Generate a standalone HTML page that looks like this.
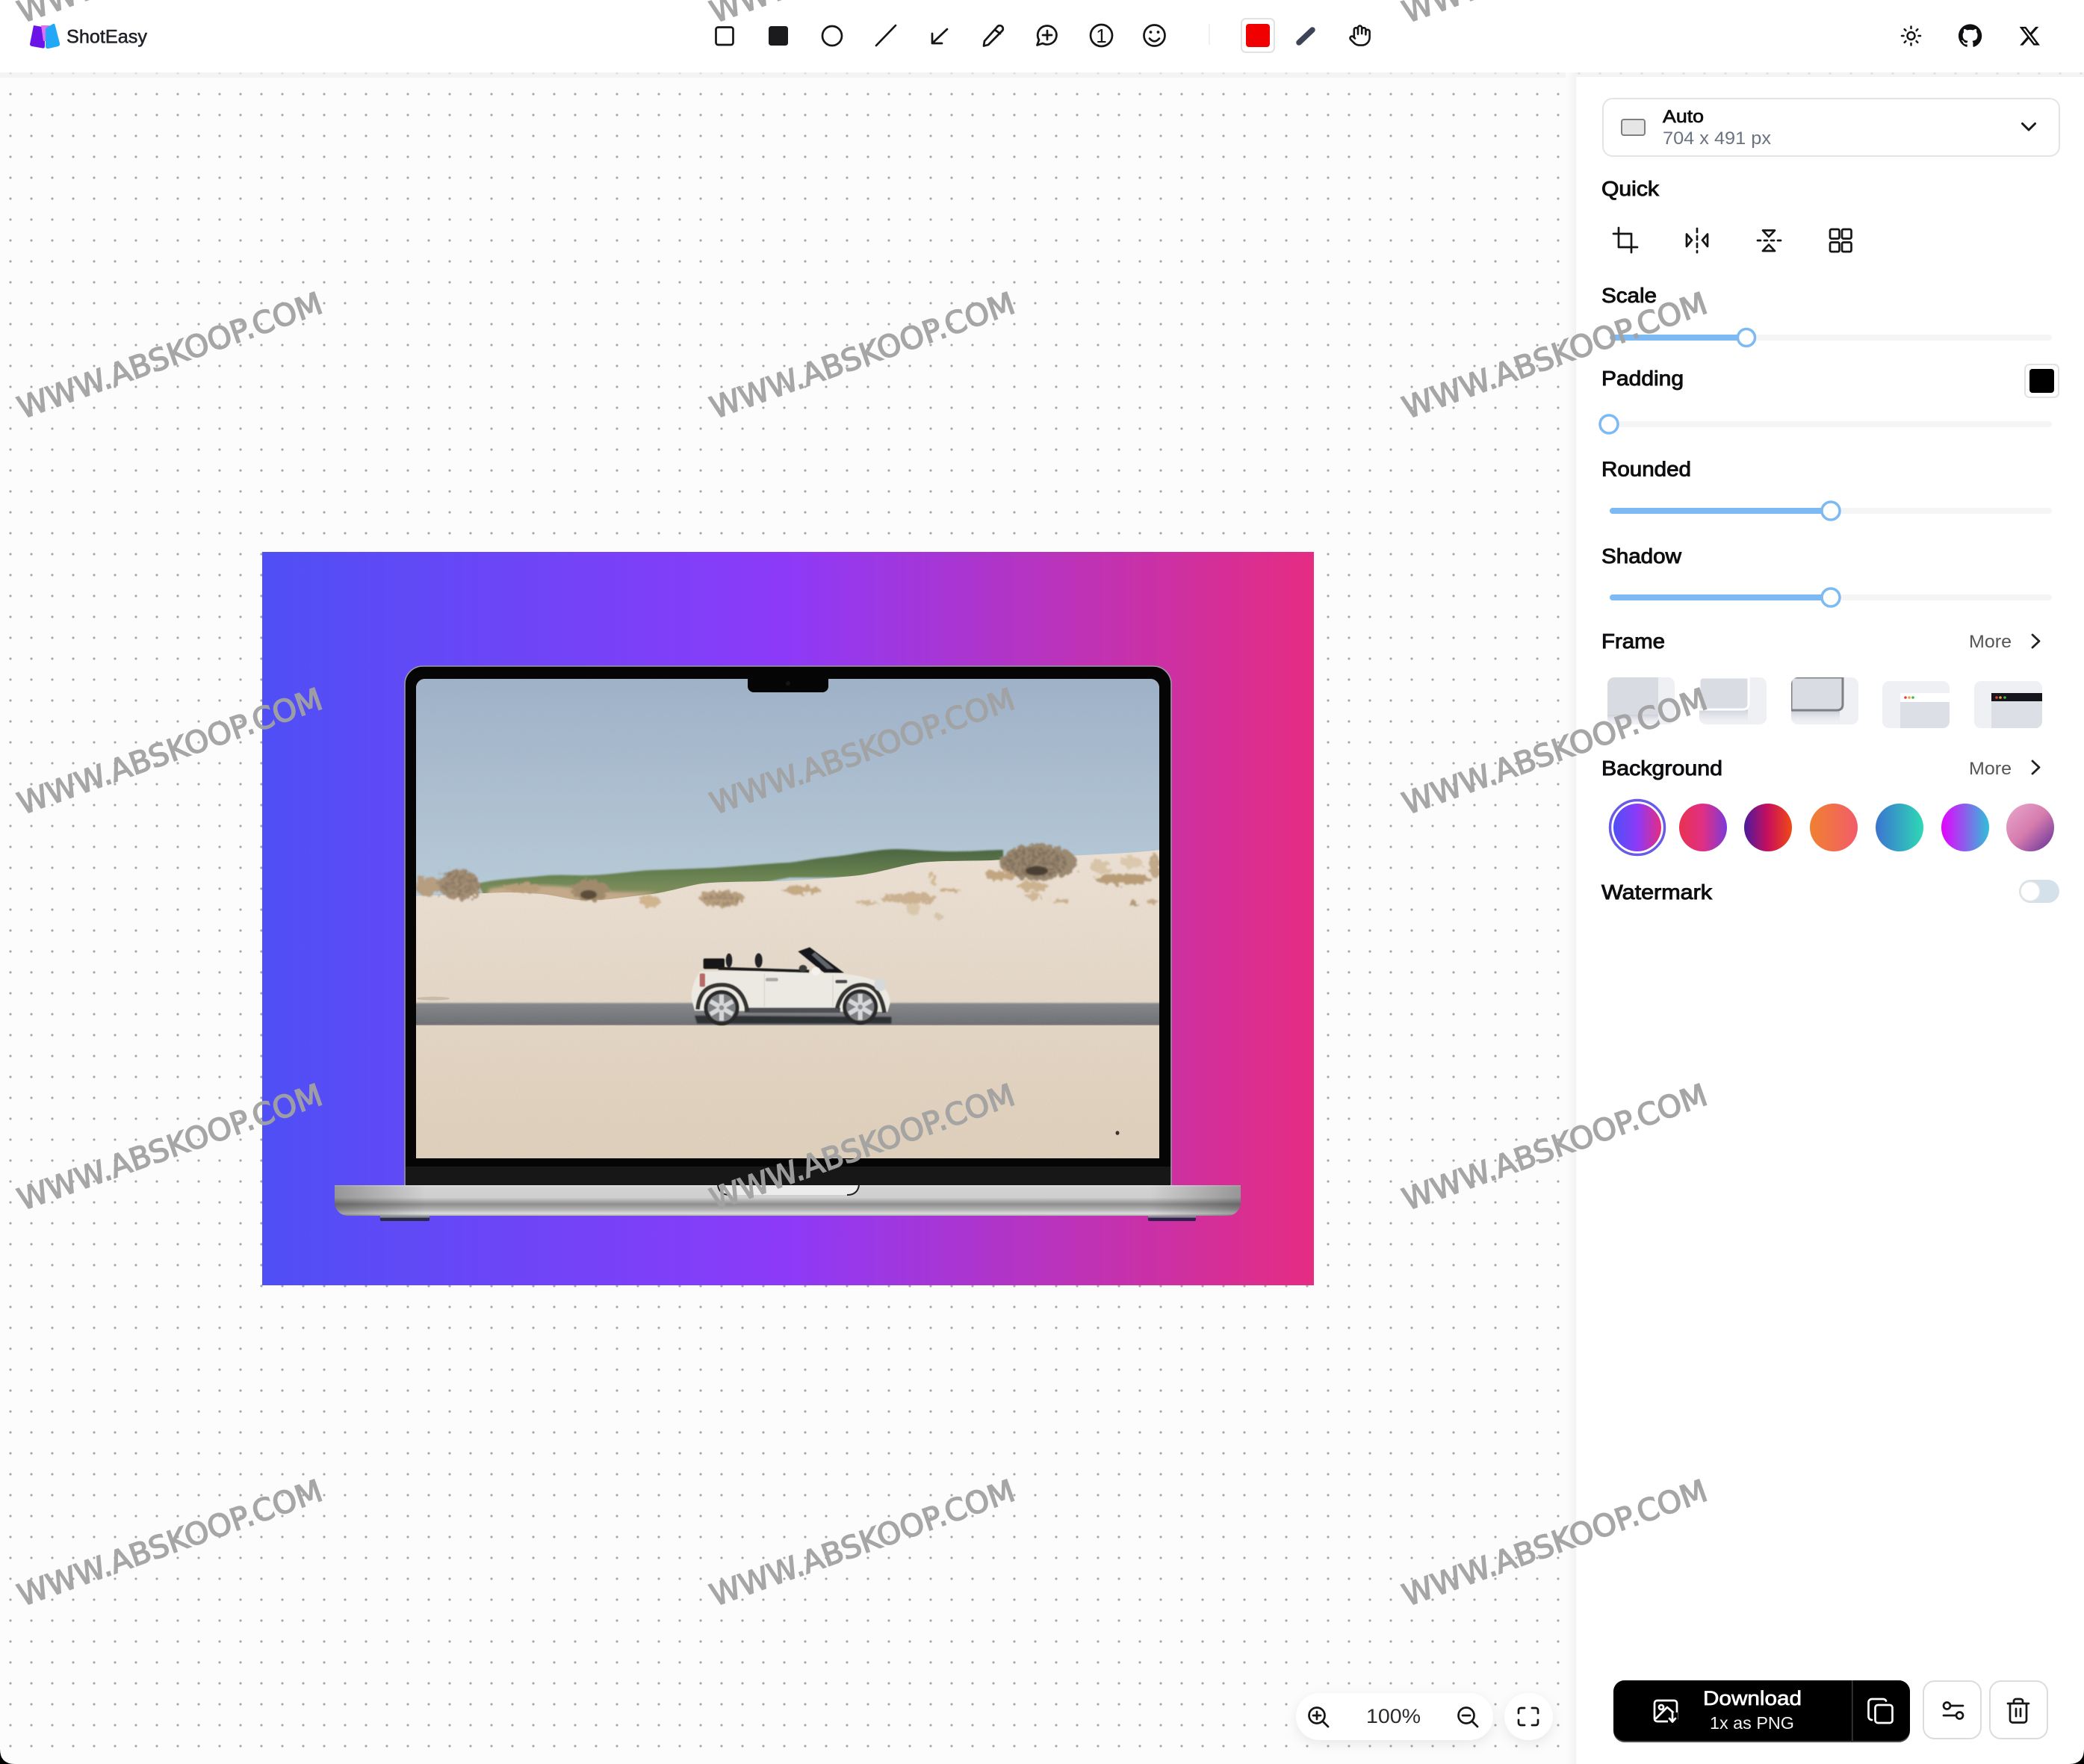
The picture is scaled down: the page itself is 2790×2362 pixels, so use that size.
<!DOCTYPE html>
<html lang="en">
<head>
<meta charset="utf-8">
<title>ShotEasy</title>
<style>
html,body{margin:0;padding:0;width:2790px;height:2362px;overflow:hidden;background:#fcfcfc}
svg{display:block}
text{font-family:"Liberation Sans",sans-serif}
.lb{font-size:28px;fill:#0e0e10;stroke:#0e0e10;stroke-width:.95px}
.more{font-size:24px;fill:#555}
.wm{font-family:"DejaVu Sans",sans-serif;font-size:41px;fill:#a2a2a2;stroke:#a2a2a2;stroke-width:1.5px;opacity:.95}
.ic{fill:none;stroke:#161618;stroke-width:2.7;stroke-linecap:round;stroke-linejoin:round}
.iw{fill:none;stroke:#fff;stroke-width:2.7;stroke-linecap:round;stroke-linejoin:round}
</style>
</head>
<body>
<svg xmlns="http://www.w3.org/2000/svg" width="2790" height="2362" viewBox="0 0 2790 2362">
<defs>
  <pattern id="dots" width="28" height="28" patternUnits="userSpaceOnUse"><circle cx="14" cy="14" r="1.6" fill="#a9a9a9"/></pattern>
  <linearGradient id="g1" x1="0" x2="1" y1="0" y2="0"><stop offset="0" stop-color="#4f4ff6"/><stop offset=".5" stop-color="#8d3af8"/><stop offset="1" stop-color="#e52c82"/></linearGradient>
  <linearGradient id="g2" x1="0" x2="1" y1="0" y2="0"><stop offset="0" stop-color="#e8324f"/><stop offset=".5" stop-color="#e02f85"/><stop offset="1" stop-color="#7c3ad8"/></linearGradient>
  <linearGradient id="g3" x1="0" x2="1" y1="0" y2="0"><stop offset="0" stop-color="#4a1a9e"/><stop offset=".5" stop-color="#c80f5c"/><stop offset="1" stop-color="#f04a14"/></linearGradient>
  <linearGradient id="g4" x1="0" x2="1" y1="0" y2="0"><stop offset="0" stop-color="#f08030"/><stop offset="1" stop-color="#f25c6a"/></linearGradient>
  <linearGradient id="g5" x1="0" x2="1" y1="0" y2="0"><stop offset="0" stop-color="#3b74d0"/><stop offset="1" stop-color="#2dd9b5"/></linearGradient>
  <linearGradient id="g6" x1="0" x2="1" y1="0" y2="0"><stop offset="0" stop-color="#e600ff"/><stop offset="1" stop-color="#2fc0d8"/></linearGradient>
  <linearGradient id="g7" x1="0" x2="1" y1="0" y2="1"><stop offset="0" stop-color="#e9a9cc"/><stop offset=".5" stop-color="#d67cae"/><stop offset="1" stop-color="#5f2d98"/></linearGradient>
  <linearGradient id="sky" x1="0" x2="0" y1="0" y2="1"><stop offset="0" stop-color="#9fb2c9"/><stop offset="1" stop-color="#b7cbd8"/></linearGradient>
  <linearGradient id="sand" x1="0" x2="0" y1="0" y2="1"><stop offset="0" stop-color="#ebe0d3"/><stop offset="1" stop-color="#e3d6c7"/></linearGradient>
  <linearGradient id="sand2" x1="0" x2="0" y1="0" y2="1"><stop offset="0" stop-color="#e3d5c3"/><stop offset="1" stop-color="#decfbb"/></linearGradient>
  <linearGradient id="road" x1="0" x2="0" y1="0" y2="1"><stop offset="0" stop-color="#85878a"/><stop offset="1" stop-color="#6e6f72"/></linearGradient>
  <linearGradient id="base" x1="0" x2="0" y1="0" y2="1"><stop offset="0" stop-color="#e6e6e6"/><stop offset=".06" stop-color="#d2d2d2"/><stop offset=".4" stop-color="#cfcfcf"/><stop offset=".62" stop-color="#8e8e8e"/><stop offset=".78" stop-color="#aeaeae"/><stop offset=".93" stop-color="#dcdcdc"/><stop offset="1" stop-color="#a4a4a4"/></linearGradient>
  <linearGradient id="baseh" x1="0" x2="1" y1="0" y2="0"><stop offset="0" stop-color="#000" stop-opacity=".28"/><stop offset=".1" stop-color="#000" stop-opacity="0"/><stop offset=".9" stop-color="#000" stop-opacity="0"/><stop offset="1" stop-color="#000" stop-opacity=".28"/></linearGradient>
  <linearGradient id="fade" x1="0" x2="0" y1="0" y2="1"><stop offset="0" stop-color="#c9ccd6" stop-opacity=".9"/><stop offset="1" stop-color="#eff0f4" stop-opacity="0"/></linearGradient>
  <linearGradient id="pshadow" x1="0" x2="1" y1="0" y2="0"><stop offset="0" stop-color="#fcfcfc"/><stop offset="1" stop-color="#f2f2f2"/></linearGradient>
  <linearGradient id="green" x1="0" x2="0" y1="0" y2="1"><stop offset="0" stop-color="#4a6540"/><stop offset=".55" stop-color="#6c8552"/><stop offset="1" stop-color="#8f9465"/></linearGradient>
  <filter id="b2" x="-10%" y="-10%" width="120%" height="120%"><feGaussianBlur stdDeviation="2"/></filter>
  <filter id="b1" x="-10%" y="-10%" width="120%" height="120%"><feGaussianBlur stdDeviation="1"/></filter>
  <filter id="b05" x="-5%" y="-5%" width="110%" height="110%"><feGaussianBlur stdDeviation="1.800"/></filter>
  <filter id="bush" x="-30%" y="-30%" width="160%" height="160%"><feTurbulence type="fractalNoise" baseFrequency=".14" numOctaves="3" seed="4" result="n"/><feDisplacementMap in="SourceGraphic" in2="n" scale="14"/><feGaussianBlur stdDeviation="1"/></filter>
  <filter id="twig" x="-30%" y="-30%" width="160%" height="160%"><feTurbulence type="fractalNoise" baseFrequency=".22" numOctaves="3" seed="8" result="n"/><feDisplacementMap in="SourceGraphic" in2="n" scale="10" result="d"/><feColorMatrix in="n" values="0 0 0 0 0 0 0 0 0 0 0 0 0 0 0 4 0 0 0 -1.500" result="m"/><feComposite in="d" in2="m" operator="in"/><feGaussianBlur stdDeviation="1"/></filter>
  <filter id="grain" x="0" y="0" width="100%" height="100%"><feTurbulence type="fractalNoise" baseFrequency=".6" numOctaves="2" seed="2"/><feColorMatrix values="0 0 0 0 .45 0 0 0 0 .4 0 0 0 0 .35 0 0 0 1.400 -.55"/></filter>
  <clipPath id="screen"><path d="M557 1551V921a12 12 0 0 1 12-12H1540a12 12 0 0 1 12 12V1551Z"/></clipPath>
  <clipPath id="f1"><rect x="2152" y="907" width="90" height="63" rx="9"/></clipPath>
  <clipPath id="f2"><rect x="2275" y="907" width="90" height="63" rx="9"/></clipPath>
  <clipPath id="f3"><rect x="2398" y="907" width="90" height="63" rx="9"/></clipPath>
  <clipPath id="f4"><rect x="2520" y="912" width="90" height="63" rx="9"/></clipPath>
  <clipPath id="f5"><rect x="2643" y="912" width="91" height="63" rx="9"/></clipPath>
</defs>

<!-- canvas -->
<rect width="2790" height="2362" fill="#fcfcfc"/>
<rect width="2790" height="2362" fill="url(#dots)"/>

<!-- main image -->
<rect x="351" y="739" width="1408" height="982" fill="url(#g1)"/>

<!-- laptop lid -->
<path d="M542 1587V916a24 24 0 0 1 24-24H1544a24 24 0 0 1 24 24V1587Z" fill="#050505" stroke="#9a9aa2" stroke-width="1.6"/>
<rect x="543" y="1562" width="1024" height="25" fill="#171717"/>

<!-- photo -->
<g clip-path="url(#screen)">
  <rect x="557" y="909" width="995" height="642" fill="#e0d2bf"/>
  <rect x="557" y="909" width="995" height="290" fill="url(#sky)"/>
  <!-- distant green -->
  <path d="M640 1183C660 1178 680 1177 724 1173C750 1170 770 1173 790 1172C820 1171 850 1166 874 1165C905 1164 930 1163 957 1162C990 1160 1030 1156 1057 1155C1080 1152 1100 1148 1117 1147C1150 1143 1175 1137 1200 1137C1225 1137 1255 1141 1283 1140C1305 1140 1325 1138 1343 1138V1175H1057L950 1195L790 1210L650 1205Z" fill="url(#green)" filter="url(#b1)"/>
  <path d="M655 1190C700 1182 760 1186 800 1192C830 1196 860 1194 880 1195L800 1210L650 1205Z" fill="#c4a98a" filter="url(#b2)"/>
  <path d="M1440 1146H1490" stroke="#4e6048" stroke-width="3" filter="url(#b1)"/>
  <!-- dune -->
  <path d="M557 1200C600 1199 640 1196 674 1195C695 1195 710 1196 724 1197C745 1199 760 1204 774 1205C790 1206 810 1205 824 1203C840 1201 855 1199 874 1197C900 1193 920 1186 940 1183C970 1180 1000 1181 1024 1180C1060 1180 1100 1177 1150 1172C1180 1168 1205 1159 1233 1155C1265 1152 1295 1153 1327 1152C1370 1149 1410 1147 1450 1145C1490 1143 1520 1142 1552 1138V1350H557Z" fill="url(#sand)"/>
  <!-- bushes -->
  <g filter="url(#bush)">
    <ellipse cx="574" cy="1187" rx="18" ry="13" fill="#b79e80"/>
    <ellipse cx="615" cy="1185" rx="28" ry="20" fill="#a58f75"/>
    <ellipse cx="790" cy="1192" rx="26" ry="14" fill="#a08a6c"/>
    <ellipse cx="700" cy="1189" rx="24" ry="6" fill="#b89d7a"/>
    <ellipse cx="967" cy="1203" rx="30" ry="11" fill="#b9a080"/>
    <ellipse cx="870" cy="1207" rx="14" ry="8" fill="#d0b58f"/>
    <ellipse cx="1390" cy="1155" rx="52" ry="24" fill="#9b8971"/>
    <ellipse cx="1340" cy="1172" rx="22" ry="6" fill="#c3a681"/>
    <ellipse cx="1503" cy="1177" rx="38" ry="7" fill="#b89c76"/>
    <ellipse cx="1473" cy="1160" rx="14" ry="9" fill="#d8c4a8"/>
    <ellipse cx="1546" cy="1160" rx="8" ry="16" fill="#c0a888"/>
    <ellipse cx="1515" cy="1155" rx="14" ry="8" fill="#dcc9ae"/>
    <ellipse cx="1217" cy="1203" rx="38" ry="7" fill="#cbb190"/>
    <ellipse cx="1073" cy="1192" rx="26" ry="5" fill="#c5a983"/>
    <ellipse cx="1160" cy="1208" rx="14" ry="3" fill="#cdb797"/>
    <ellipse cx="1250" cy="1178" rx="5" ry="7" fill="#d2b992"/>
    <ellipse cx="1383" cy="1187" rx="22" ry="6" fill="#cdb28e"/>
    <ellipse cx="1383" cy="1200" rx="10" ry="5" fill="#d0b796"/>
    <ellipse cx="1420" cy="1207" rx="12" ry="3" fill="#c9b08e"/>
    <ellipse cx="1517" cy="1210" rx="6" ry="3" fill="#b39a78"/>
    <ellipse cx="1543" cy="1207" rx="8" ry="3" fill="#c4a987"/>
    <ellipse cx="1257" cy="1227" rx="6" ry="4" fill="#d6c5aa"/>
    <ellipse cx="1223" cy="1217" rx="10" ry="8" fill="#dac8ab"/>
    <ellipse cx="1272" cy="1192" rx="14" ry="3" fill="#c9ac88"/>
  </g>
  <g filter="url(#twig)" opacity=".55">
    <ellipse cx="615" cy="1182" rx="26" ry="18" fill="#7a6854"/>
    <ellipse cx="1385" cy="1155" rx="44" ry="20" fill="#6a5a48"/>
    <ellipse cx="967" cy="1204" rx="24" ry="8" fill="#8a755c"/>
  </g>
  <ellipse cx="788" cy="1198" rx="11" ry="6" fill="#5a4b38" filter="url(#b1)"/>
  <ellipse cx="1388" cy="1166" rx="15" ry="6" fill="#4a3e30" filter="url(#b1)"/>
  <!-- road and foreground -->
  <rect x="550" y="1343" width="1010" height="30" fill="url(#road)" filter="url(#b1)"/>
  <rect x="557" y="1373" width="995" height="180" fill="url(#sand2)"/>
  <ellipse cx="1496" cy="1517" rx="2.500" ry="2.800" fill="#3a3028"/>
  <ellipse cx="580" cy="1337" rx="22" ry="2.500" fill="#c9bba8"/>
  <rect x="557" y="909" width="995" height="642" filter="url(#grain)" opacity=".12"/>
  <!-- car -->
  <g transform="translate(850 1180) scale(.33333)" filter="url(#b05)">
    <path d="M240 540L1030 545V572L250 572Z" fill="#2f3134" filter="url(#b2)"/>
    <path d="M228 475Q222 420 262 362L700 362L840 372Q950 384 985 412Q1025 445 1025 490L1015 525L240 520Z" fill="#ebe9e2"/>
    <rect x="440" y="508" width="385" height="20" fill="#4e4f53"/>
    <path d="M252 515C258 440 298 416 350 416C402 416 440 450 452 524M812 510C828 445 868 416 915 416C962 416 992 460 1002 528" fill="none" stroke="#353433" stroke-width="17"/>
    <rect x="275" y="310" width="85" height="42" rx="6" fill="#141416"/>
    <ellipse cx="378" cy="318" rx="13" ry="28" fill="#242426"/>
    <ellipse cx="497" cy="318" rx="15" ry="29" fill="#222226"/>
    <path d="M335 350L700 362" stroke="#1a1a1c" stroke-width="12"/>
    <path d="M655 282L702 265L840 368L760 368Z" fill="#16161a"/>
    <path d="M722 285L800 352L772 352L710 296Z" fill="#5f6568"/>
    <ellipse cx="675" cy="350" rx="16" ry="14" fill="#3a3a38"/>
    <ellipse cx="727" cy="362" rx="18" ry="17" fill="#f4f2ec"/>
    <rect x="260" y="370" width="22" height="54" rx="6" fill="#b86a66"/>
    <ellipse cx="985" cy="416" rx="24" ry="26" fill="#d6d9da"/>
    <rect x="525" y="388" width="50" height="14" rx="6" fill="#a9a9a6"/>
    <rect x="805" y="396" width="48" height="14" rx="6" fill="#4c4c4e"/>
    <path d="M520 372V505M795 378V505" stroke="#cfcdc5" stroke-width="3"/>
    <circle cx="348" cy="508" r="71" fill="#29292b"/>
    <circle cx="348" cy="508" r="56" fill="#7d7f83"/>
    <g stroke="#d6d7d8" stroke-width="18"><path d="M348 456V560M303 482L393 534M303 534L393 482"/></g>
    <circle cx="348" cy="508" r="10" fill="#8c8d90"/>
    <circle cx="905" cy="505" r="71" fill="#29292b"/>
    <circle cx="905" cy="505" r="56" fill="#7d7f83"/>
    <g stroke="#d6d7d8" stroke-width="18"><path d="M905 453V557M860 479L950 531M860 531L950 479"/></g>
    <circle cx="905" cy="505" r="10" fill="#8c8d90"/>
  </g>
</g>
<!-- notch -->
<path d="M1001 908H1109V919a8 8 0 0 1-8 8H1009a8 8 0 0 1-8-8Z" fill="#050505"/>
<circle cx="1055" cy="915" r="3" fill="#14141c"/>

<!-- base -->
<path d="M448 1587H1661V1610a18 18 0 0 1-18 18H466a18 18 0 0 1-18-18Z" fill="url(#base)"/>
<path d="M448 1587H1661V1610a18 18 0 0 1-18 18H466a18 18 0 0 1-18-18Z" fill="url(#baseh)"/>
<path d="M961 1587H1150Q1148 1600 1134 1600H977Q963 1600 961 1587Z" fill="#ececec"/>
<path d="M961 1587Q963 1600 977 1600" fill="none" stroke="#222" stroke-width="2"/>
<path d="M1150 1587Q1148 1600 1134 1600" fill="none" stroke="#222" stroke-width="2"/>
<rect x="509" y="1628" width="66" height="7" rx="2" fill="#2a2a4a"/>
<rect x="509" y="1628" width="66" height="2.500" fill="#8a8a94"/>
<rect x="1537" y="1628" width="64" height="7" rx="2" fill="#321f50"/>
<rect x="1537" y="1628" width="64" height="2.500" fill="#8a8a94"/>

<!-- header -->
<rect x="0" y="97" width="2790" height="7" fill="#f2f2f2" opacity=".75"/>
<rect width="2790" height="97" fill="#fff"/>
<!-- logo -->
<path d="M45 34L57 36Q60 36 60 39V62Q60 65 57 64.500L43 62Q40 61.500 40 59Z" fill="#6a14e8"/>
<path d="M55 34H66V55H58Z" fill="#da72f2"/>
<path d="M64 36L71 32Q73 31 73.500 33L80 58Q80.500 61 78 62L65 65Q61 65.500 61 62V40Q61 37 64 36Z" fill="#22a8f6"/>
<text x="89" y="57.500" font-size="25" fill="#20222a" stroke="#20222a" stroke-width=".55" textLength="108" lengthAdjust="spacingAndGlyphs">ShotEasy</text>
<!-- tools -->
<rect class="ic" x="958.500" y="36.500" width="23" height="23.500" rx="3"/>
<rect x="1029" y="35" width="26" height="26" rx="3.500" fill="#1b1b1d"/>
<circle class="ic" cx="1114" cy="48" r="13"/>
<path class="ic" d="M1173 61L1199 34"/>
<path class="ic" d="M1268 39L1248 58M1248 45V58H1261"/>
<path class="ic" d="M1335 36a4.200 4.200 0 0 1 7 5L1323 60L1317 61.500L1318 55ZM1332 40L1339 45"/>
<path class="ic" d="M1402 34.500a12.500 12.500 0 1 1-6 23.500L1388.500 60.500L1391 53.500A12.500 12.500 0 0 1 1402 34.500ZM1402 41V53M1396 47H1408"/>
<circle class="ic" cx="1474.500" cy="47.500" r="14.500"/>
<text x="1474.500" y="57" font-size="26" text-anchor="middle" fill="#161618">1</text>
<circle class="ic" cx="1545.500" cy="47.500" r="14"/>
<circle cx="1540.500" cy="43" r="1.900" fill="#161618"/><circle cx="1550.500" cy="43" r="1.900" fill="#161618"/>
<path class="ic" d="M1539 51.500Q1545.500 59 1552 51.500"/>
<rect x="1618" y="32" width="2" height="28" fill="#efefef"/>
<rect x="1662" y="25" width="44" height="45" rx="6" fill="#fff" stroke="#e2e2e2" stroke-width="2"/>
<rect x="1668" y="32" width="32" height="31" rx="4" fill="#f00000"/>
<path d="M1739 57L1757 40" stroke="#3f4356" stroke-width="7.500" stroke-linecap="round"/>
<g class="ic" transform="translate(1805 32) scale(1.3)" style="stroke-width:2"><path d="M18 11V6a2 2 0 0 0-2-2a2 2 0 0 0-2 2"/><path d="M14 10V4a2 2 0 0 0-2-2a2 2 0 0 0-2 2v2"/><path d="M10 10.500V6a2 2 0 0 0-2-2a2 2 0 0 0-2 2v8"/><path d="M18 8a2 2 0 1 1 4 0v6a8 8 0 0 1-8 8h-2c-2.800 0-4.500-.86-5.990-2.340l-3.600-3.600a2 2 0 0 1 2.830-2.820L7 15"/></g>
<!-- right header -->
<g class="ic" transform="translate(2543.500 33) scale(1.25)" style="stroke-width:2"><circle cx="12" cy="12" r="4"/><path d="M12 2v2M12 20v2M4.930 4.930l1.410 1.410M17.660 17.660l1.410 1.410M2 12h2M20 12h2M6.340 17.660l-1.410 1.410M19.070 4.930l-1.410 1.410"/></g>
<path transform="translate(2622 32) scale(1.3)" fill="#0f0f11" d="M12 .297c-6.630 0-12 5.373-12 12 0 5.303 3.438 9.800 8.205 11.385.6.113.82-.258.82-.577 0-.285-.01-1.040-.015-2.040-3.338.724-4.042-1.610-4.042-1.610C4.422 18.070 3.633 17.700 3.633 17.700c-1.087-.744.084-.729.084-.729 1.205.084 1.838 1.236 1.838 1.236 1.070 1.835 2.809 1.305 3.495.998.108-.776.417-1.305.76-1.605-2.665-.3-5.466-1.332-5.466-5.930 0-1.310.465-2.380 1.235-3.220-.135-.303-.54-1.523.105-3.176 0 0 1.005-.322 3.300 1.230.96-.267 1.980-.399 3-.405 1.020.006 2.040.138 3 .405 2.280-1.552 3.285-1.230 3.285-1.230.645 1.653.24 2.873.12 3.176.765.84 1.230 1.910 1.230 3.220 0 4.610-2.805 5.625-5.475 5.920.42.36.81 1.096.81 2.220 0 1.606-.015 2.896-.015 3.286 0 .315.21.69.825.57C20.565 22.092 24 17.592 24 12.297c0-6.627-5.373-12-12-12"/>
<path transform="translate(2702 33) scale(1.27)" fill="#0f0f11" d="M18.244 2.250h3.308l-7.227 8.260 8.502 11.240H16.170l-5.214-6.817L4.990 21.750H1.680l7.730-8.835L1.254 2.250H8.080l4.713 6.231zm-1.161 17.520h1.833L7.084 4.126H5.117z"/>

<!-- panel -->
<rect x="2096" y="97" width="15" height="2265" fill="url(#pshadow)"/>
<rect x="2110" y="103" width="680" height="2259" fill="#fff"/>
<rect x="2146" y="132" width="611" height="77" rx="13" fill="#fff" stroke="#e4e4e4" stroke-width="2"/>
<rect x="2171" y="160" width="31" height="21" rx="3" fill="#e6e6e6" stroke="#808080" stroke-width="2"/>
<text x="2226" y="164" font-size="24" fill="#0e0e10" stroke="#0e0e10" stroke-width=".7" textLength="55" lengthAdjust="spacingAndGlyphs">Auto</text>
<text x="2226" y="193" font-size="24" fill="#6b7280" textLength="145" lengthAdjust="spacingAndGlyphs">704 x 491 px</text>
<path d="M2707.500 165.500L2716 174L2724.500 165.500" fill="none" stroke="#18181a" stroke-width="3" stroke-linecap="round" stroke-linejoin="round"/>

<text class="lb" x="2144" y="262" textLength="77" lengthAdjust="spacingAndGlyphs">Quick</text>
<path class="ic" d="M2167 305V331H2192M2160 313H2184V338"/>
<path class="ic" d="M2272 306V338" stroke-dasharray="5 5"/>
<path class="ic" d="M2258 313.500L2265 321.500L2258 330ZM2286 313.500L2279 321.500L2286 330Z"/>
<path class="ic" d="M2353 322H2384" stroke-dasharray="4 5"/>
<path class="ic" d="M2360 308.500H2376L2368 317ZM2360 336H2376L2368 327.500Z"/>
<rect class="ic" x="2450" y="307" width="12.500" height="12.500" rx="2"/><rect class="ic" x="2466" y="307" width="12.500" height="12.500" rx="2"/><rect class="ic" x="2450" y="324.500" width="12.500" height="12.500" rx="2"/><rect class="ic" x="2466" y="324.500" width="12.500" height="12.500" rx="2"/>

<text class="lb" x="2144" y="405" textLength="74" lengthAdjust="spacingAndGlyphs">Scale</text>
<rect x="2155" y="448" width="592" height="8" rx="4" fill="#f5f5f5"/>
<rect x="2155" y="448" width="183" height="8" rx="4" fill="#7db9f2"/>
<circle cx="2338" cy="452" r="11.500" fill="#fff" stroke="#7db9f2" stroke-width="3.500"/>

<text class="lb" x="2144" y="516" textLength="110" lengthAdjust="spacingAndGlyphs">Padding</text>
<rect x="2711" y="488" width="45" height="44" rx="6" fill="#fff" stroke="#e2e2e2" stroke-width="2"/>
<rect x="2717" y="494" width="33" height="32" rx="4" fill="#000"/>
<rect x="2155" y="564" width="592" height="8" rx="4" fill="#f5f5f5"/>
<circle cx="2154" cy="568" r="12" fill="#fff" stroke="#7db9f2" stroke-width="3.500"/>

<text class="lb" x="2144" y="637.500" textLength="120" lengthAdjust="spacingAndGlyphs">Rounded</text>
<rect x="2155" y="680" width="592" height="8" rx="4" fill="#f5f5f5"/>
<rect x="2155" y="680" width="296" height="8" rx="4" fill="#7db9f2"/>
<circle cx="2451" cy="684" r="12" fill="#fff" stroke="#7db9f2" stroke-width="3.500"/>

<text class="lb" x="2144" y="754" textLength="107" lengthAdjust="spacingAndGlyphs">Shadow</text>
<rect x="2155" y="796" width="592" height="8" rx="4" fill="#f5f5f5"/>
<rect x="2155" y="796" width="296" height="8" rx="4" fill="#7db9f2"/>
<circle cx="2451" cy="800" r="12" fill="#fff" stroke="#7db9f2" stroke-width="3.500"/>

<text class="lb" x="2144" y="868" textLength="85" lengthAdjust="spacingAndGlyphs">Frame</text>
<text class="more" x="2636" y="867" textLength="57" lengthAdjust="spacingAndGlyphs">More</text>
<path d="M2721 850L2730 858.500L2721 867" fill="none" stroke="#222" stroke-width="2.800" stroke-linecap="round" stroke-linejoin="round"/>

<!-- frames -->
<g clip-path="url(#f1)"><rect x="2152" y="907" width="90" height="63" fill="#eff0f4"/><rect x="2152" y="907" width="68" height="50" fill="#d9dbe3"/><rect x="2152" y="957" width="68" height="13" fill="url(#fade)"/></g>
<g clip-path="url(#f2)"><rect x="2275" y="907" width="90" height="63" fill="#eff0f4"/><rect x="2275" y="950" width="65" height="20" fill="url(#fade)"/><path d="M2275 907H2341V942Q2341 950 2333 950H2275Z" fill="#dadce4" stroke="#fff" stroke-width="3"/></g>
<g clip-path="url(#f3)"><rect x="2398" y="907" width="90" height="63" fill="#eff0f4"/><rect x="2398" y="952" width="65" height="18" fill="url(#fade)"/><path d="M2398 907H2467V943Q2467 951 2459 951H2398Z" fill="#dadce4" stroke="#7f7f85" stroke-width="3"/></g>
<g clip-path="url(#f4)"><rect x="2520" y="912" width="90" height="63" fill="#eff0f4"/><rect x="2544" y="928" width="66" height="47" fill="#dcdfe6"/><rect x="2544" y="928" width="66" height="12" fill="#fff"/><circle cx="2551" cy="934" r="1.800" fill="#e0433e"/><circle cx="2556" cy="934" r="1.800" fill="#e3a83a"/><circle cx="2561" cy="934" r="1.800" fill="#4fb04f"/></g>
<g clip-path="url(#f5)"><rect x="2643" y="912" width="91" height="63" fill="#eff0f4"/><rect x="2666" y="928" width="68" height="47" fill="#dcdfe6"/><rect x="2666" y="928" width="68" height="11" fill="#16161c"/><circle cx="2673" cy="934" r="1.800" fill="#e0433e"/><circle cx="2678" cy="934" r="1.800" fill="#e3a83a"/><circle cx="2684" cy="934" r="1.800" fill="#4fb04f"/></g>

<text class="lb" x="2144" y="1038" textLength="162" lengthAdjust="spacingAndGlyphs">Background</text>
<text class="more" x="2636" y="1037" textLength="57" lengthAdjust="spacingAndGlyphs">More</text>
<path d="M2721 1019L2730 1027.500L2721 1036" fill="none" stroke="#222" stroke-width="2.800" stroke-linecap="round" stroke-linejoin="round"/>

<!-- backgrounds -->
<circle cx="2192" cy="1108" r="36.500" fill="#fff" stroke="#6a5ae8" stroke-width="3.500"/>
<circle cx="2192" cy="1108" r="32" fill="url(#g1)"/>
<circle cx="2280" cy="1108" r="32" fill="url(#g2)"/>
<circle cx="2367" cy="1108" r="32" fill="url(#g3)"/>
<circle cx="2455" cy="1108" r="32" fill="url(#g4)"/>
<circle cx="2543" cy="1108" r="32" fill="url(#g5)"/>
<circle cx="2631" cy="1108" r="32" fill="url(#g6)"/>
<circle cx="2718" cy="1108" r="32" fill="url(#g7)"/>

<text class="lb" x="2144" y="1204" textLength="148" lengthAdjust="spacingAndGlyphs">Watermark</text>
<rect x="2703" y="1178" width="54" height="31" rx="15.500" fill="#d5e1ea"/>
<circle cx="2718" cy="1193.500" r="13" fill="#fff" stroke="#e4e4e4" stroke-width="1.500"/>

<!-- zoom pill -->
<g style="filter:drop-shadow(0 5px 8px rgba(0,0,0,.08))">
 <rect x="1735" y="2267" width="264" height="63" rx="31.500" fill="#fff"/>
 <rect x="2014" y="2267" width="65" height="63" rx="31.500" fill="#fff"/>
</g>
<circle class="ic" cx="1763" cy="2297" r="10.500"/><path class="ic" d="M1771 2305L1778 2312M1763 2292V2302M1758 2297H1768"/>
<text x="1829" y="2307" font-size="27" fill="#2c2c30" textLength="73" lengthAdjust="spacingAndGlyphs">100%</text>
<circle class="ic" cx="1963" cy="2297" r="10.500"/><path class="ic" d="M1971 2305L1978 2312M1958 2297H1968"/>
<path class="ic" d="M2033 2294V2290a3 3 0 0 1 3-3H2041M2051 2287H2056a3 3 0 0 1 3 3V2294M2059 2303V2307a3 3 0 0 1-3 3H2051M2041 2310H2036a3 3 0 0 1-3-3V2303"/>

<!-- download -->
<rect x="2160" y="2250" width="397" height="83" rx="15" fill="#4b4b4b"/>
<rect x="2160" y="2250" width="397" height="81" rx="15" fill="#000"/>
<rect x="2479" y="2250" width="1.500" height="83" fill="#3e3e3e"/>
<rect class="iw" x="2215" y="2277" width="30" height="28" rx="3.500"/>
<circle class="iw" cx="2224" cy="2286" r="3"/>
<path class="iw" d="M2217 2301L2232 2286L2240 2293"/>
<rect x="2233" y="2293" width="13" height="15" fill="#000"/>
<path class="iw" d="M2239 2292V2305M2235 2301L2239 2305.500L2243 2301"/>
<text x="2280" y="2283" font-size="27" fill="#fff" stroke="#fff" stroke-width=".7" textLength="132" lengthAdjust="spacingAndGlyphs">Download</text>
<text x="2289" y="2315" font-size="23" fill="#f2f2f2" textLength="113" lengthAdjust="spacingAndGlyphs">1x as PNG</text>
<rect class="iw" x="2510.500" y="2283" width="23" height="24" rx="3.500"/>
<path class="iw" d="M2506 2303a4.500 4.500 0 0 1-4.500-4.500V2279.500a4.500 4.500 0 0 1 4.500-4.500H2521a4.500 4.500 0 0 1 4 2.500"/>

<rect x="2575" y="2251" width="77" height="77" rx="15" fill="#fff" stroke="#dcdcdc" stroke-width="2"/>
<circle class="ic" cx="2606.500" cy="2284" r="4.500"/><path class="ic" d="M2612 2284H2628"/>
<circle class="ic" cx="2623.500" cy="2297" r="4.500"/><path class="ic" d="M2602 2297H2618"/>
<rect x="2664" y="2251" width="77" height="77" rx="15" fill="#fff" stroke="#dcdcdc" stroke-width="2"/>
<path class="ic" d="M2688 2281H2716M2696 2281V2278a3 3 0 0 1 3-3H2705a3 3 0 0 1 3 3V2281M2691 2281V2303a3.500 3.500 0 0 0 3.500 3.500H2709.500a3.500 3.500 0 0 0 3.500-3.500V2281M2699 2288V2298M2705 2288V2298"/>

<!-- window corners -->
<path d="M2790 2342V2362H2770Q2790 2362 2790 2342Z" fill="#000"/>
<path d="M0 2342V2362H20Q0 2362 0 2342Z" fill="#000"/>

<!-- watermarks -->
<g>
 <text class="wm" transform="translate(30 31) rotate(-19.500)" textLength="429" lengthAdjust="spacingAndGlyphs">WWW.ABSKOOP.COM</text>
 <text class="wm" transform="translate(957 31) rotate(-19.500)" textLength="429" lengthAdjust="spacingAndGlyphs">WWW.ABSKOOP.COM</text>
 <text class="wm" transform="translate(1884 31) rotate(-19.500)" textLength="429" lengthAdjust="spacingAndGlyphs">WWW.ABSKOOP.COM</text>
 <text class="wm" transform="translate(30 561) rotate(-19.500)" textLength="429" lengthAdjust="spacingAndGlyphs">WWW.ABSKOOP.COM</text>
 <text class="wm" transform="translate(957 561) rotate(-19.500)" textLength="429" lengthAdjust="spacingAndGlyphs">WWW.ABSKOOP.COM</text>
 <text class="wm" transform="translate(1884 561) rotate(-19.500)" textLength="429" lengthAdjust="spacingAndGlyphs">WWW.ABSKOOP.COM</text>
 <text class="wm" transform="translate(30 1091) rotate(-19.500)" textLength="429" lengthAdjust="spacingAndGlyphs">WWW.ABSKOOP.COM</text>
 <text class="wm" transform="translate(957 1091) rotate(-19.500)" textLength="429" lengthAdjust="spacingAndGlyphs">WWW.ABSKOOP.COM</text>
 <text class="wm" transform="translate(1884 1091) rotate(-19.500)" textLength="429" lengthAdjust="spacingAndGlyphs">WWW.ABSKOOP.COM</text>
 <text class="wm" transform="translate(30 1621) rotate(-19.500)" textLength="429" lengthAdjust="spacingAndGlyphs">WWW.ABSKOOP.COM</text>
 <text class="wm" transform="translate(957 1621) rotate(-19.500)" textLength="429" lengthAdjust="spacingAndGlyphs">WWW.ABSKOOP.COM</text>
 <text class="wm" transform="translate(1884 1621) rotate(-19.500)" textLength="429" lengthAdjust="spacingAndGlyphs">WWW.ABSKOOP.COM</text>
 <text class="wm" transform="translate(30 2151) rotate(-19.500)" textLength="429" lengthAdjust="spacingAndGlyphs">WWW.ABSKOOP.COM</text>
 <text class="wm" transform="translate(957 2151) rotate(-19.500)" textLength="429" lengthAdjust="spacingAndGlyphs">WWW.ABSKOOP.COM</text>
 <text class="wm" transform="translate(1884 2151) rotate(-19.500)" textLength="429" lengthAdjust="spacingAndGlyphs">WWW.ABSKOOP.COM</text>
</g>
</svg>
</body>
</html>
